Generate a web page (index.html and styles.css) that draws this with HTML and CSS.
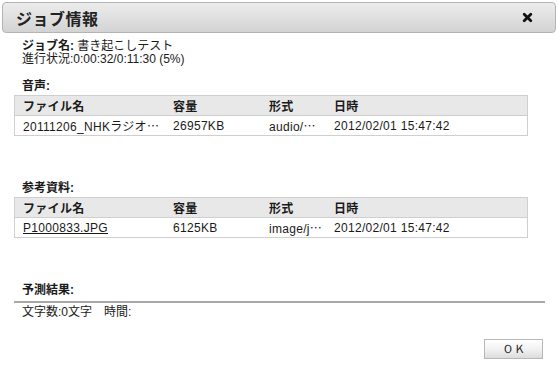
FILE: index.html
```html
<!DOCTYPE html>
<html lang="ja">
<head>
    <meta charset="UTF-8">
    <title>ジョブ情報</title>
    <link rel="stylesheet" href="styles.css">
</head>
<body>

<div class="dialog">
    <div class="titlebar">
        <span class="title">ジョブ情報</span>
        <span class="close">
            <svg width="11" height="11" viewBox="0 0 11 11">
                <path d="M2.2 2.2 L8.8 8.8 M8.8 2.2 L2.2 8.8" stroke="#111" stroke-width="2.8" stroke-linecap="round"/>
            </svg>
        </span>
    </div>

    <div class="info">
        <div><b>ジョブ名:</b> 書き起こしテスト</div>
        <div>進行状況:0:00:32/0:11:30 (5%)</div>
    </div>

    <div class="label label-audio">音声:</div>
    <table class="files">
        <tr>
            <th class="c-name">ファイル名</th>
            <th class="c-size">容量</th>
            <th class="c-type">形式</th>
            <th>日時</th>
        </tr>
        <tr>
            <td>20111206_NHKラジオ<span class="dots">…</span></td>
            <td>26957KB</td>
            <td>audio/<span class="dots">…</span></td>
            <td>2012/02/01 15:47:42</td>
        </tr>
    </table>

    <div class="label label-gap">参考資料:</div>
    <table class="files">
        <tr>
            <th class="c-name">ファイル名</th>
            <th class="c-size">容量</th>
            <th class="c-type">形式</th>
            <th>日時</th>
        </tr>
        <tr>
            <td><a href="#">P1000833.JPG</a></td>
            <td>6125KB</td>
            <td>image/j<span class="dots">…</span></td>
            <td>2012/02/01 15:47:42</td>
        </tr>
    </table>

    <div class="label label-gap result-head">予測結果:</div>
    <div class="result">文字数:0文字　時間:</div>

    <div class="actions">
        <button type="button">ＯＫ</button>
    </div>
</div>

</body>
</html>
```

FILE: styles.css
```css
body {
    margin: 0;
    background: #fff;
    color: #1a1a1a;
    font-family: "Liberation Sans", "Noto Sans CJK JP", sans-serif;
    font-size: 12px;
}
.dialog {
    width: 560px;
    height: 366px;
}
.titlebar {
    display: flex;
    align-items: center;
    justify-content: space-between;
    height: 29px;
    margin: 2px 4px 0 2px;
    padding: 0 22px 0 13px;
    border: 1px solid #b4b4b4;
    border-radius: 4px;
    background: linear-gradient(#ececec, #d3d3d3);
}
.title {
    font-size: 16px;
    font-weight: bold;
    color: #222;
    letter-spacing: 0.5px;
}
.close {
    display: flex;
}
.info {
    margin-top: 7px;
    padding-left: 22px;
    line-height: 13px;
}
.info b {
    font-weight: bold;
}
.label {
    padding-left: 22px;
    line-height: 13px;
    font-weight: bold;
}
.label-audio {
    margin-top: 14px;
}
.label-gap {
    margin-top: 46px;
}
.files {
    width: 514px;
    margin: 2px 0 0 14px;
    border-collapse: collapse;
    letter-spacing: 0.3px;
}
.files th, .files td {
    height: 19px;
    padding: 0 0 0 8px;
    text-align: left;
    border-top: 1px solid #cfcfcf;
    border-bottom: 1px solid #cfcfcf;
}
.files th {
    background: #e8e8e8;
    font-weight: bold;
    font-size: 12px;
}
.files tr > :first-child {
    border-left: 1px solid #cfcfcf;
}
.files tr > :last-child {
    border-right: 1px solid #cfcfcf;
}
.c-name {
    width: 142px;
}
.c-size {
    width: 88px;
}
.c-type {
    width: 57px;
}
.dots {
    font-family: "Noto Sans CJK JP", sans-serif;
    letter-spacing: 0;
}
.files a {
    color: #1a1a1a;
}
.result-head {
    margin-left: 14px;
    margin-right: 15px;
    padding-left: 8px;
    padding-bottom: 4px;
    border-bottom: 2px solid #a8a8a8;
}
.result {
    padding-left: 22px;
    margin-top: 3px;
    line-height: 13px;
}
.actions {
    display: flex;
    justify-content: flex-end;
    margin-top: 20px;
    padding-right: 17px;
}
button {
    width: 59px;
    height: 20px;
    padding: 0;
    border: 1px solid #b8b8b8;
    background: linear-gradient(#ffffff 0%, #f2f2f2 50%, #dcdcdc 100%);
    font-family: "Liberation Sans", sans-serif;
    font-size: 12px;
    color: #222;
}
```
